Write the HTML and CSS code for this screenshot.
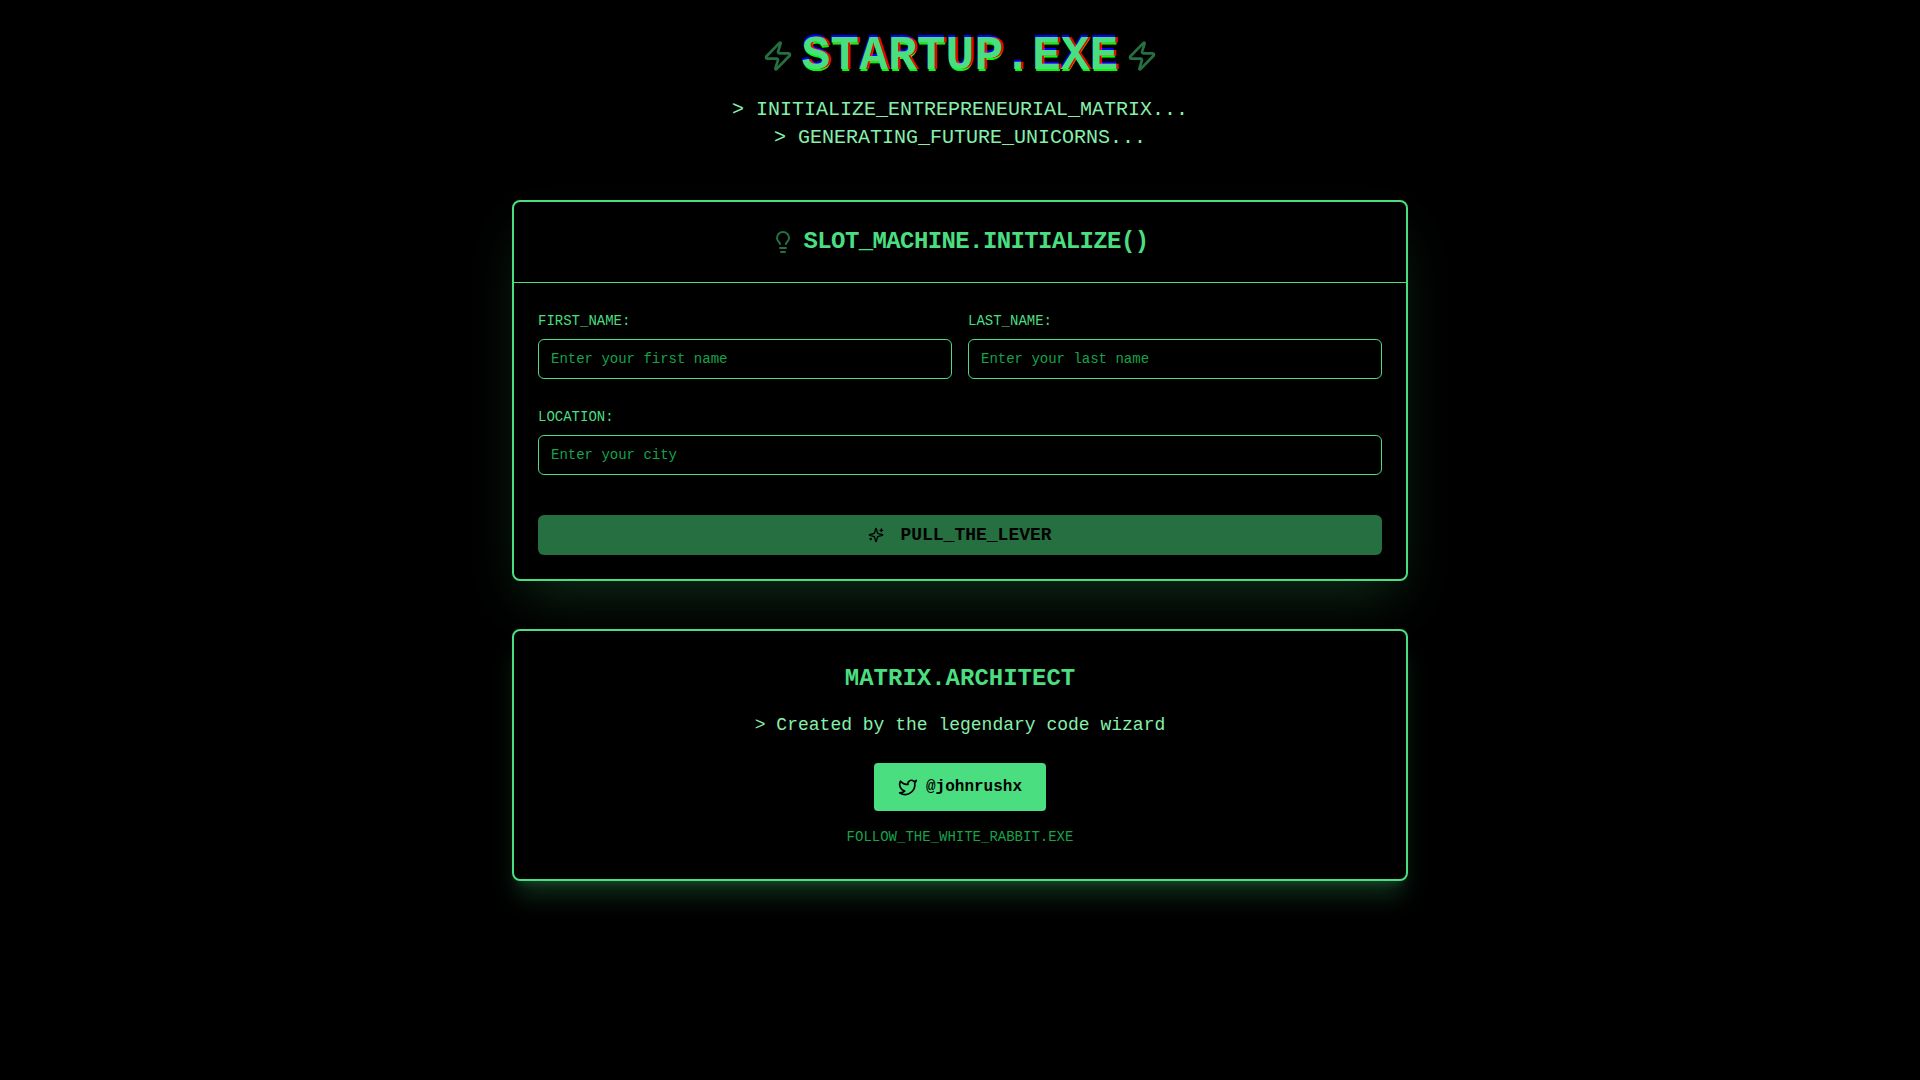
FILE: index.html
```html
<!DOCTYPE html>
<html lang="en">
<head>
    <meta charset="UTF-8">
    <meta name="viewport" content="width=device-width, initial-scale=1.0">
    <title>STARTUP.EXE</title>
    <link rel="stylesheet" href="styles.css">
</head>
<body>
    <div class="container">
        <header class="header">
            <div class="brand">
                <svg class="icon icon-lg dim" viewBox="0 0 24 24"><path d="M4 14a1 1 0 0 1-.78-1.63l9.9-10.2a.5.5 0 0 1 .86.46l-1.92 6.02A1 1 0 0 0 13 10h7a1 1 0 0 1 .78 1.63l-9.9 10.2a.5.5 0 0 1-.86-.46l1.92-6.02A1 1 0 0 0 11 14z"/></svg>
                <h1 class="glitch">STARTUP.EXE</h1>
                <svg class="icon icon-lg dim" viewBox="0 0 24 24"><path d="M4 14a1 1 0 0 1-.78-1.63l9.9-10.2a.5.5 0 0 1 .86.46l-1.92 6.02A1 1 0 0 0 13 10h7a1 1 0 0 1 .78 1.63l-9.9 10.2a.5.5 0 0 1-.86-.46l1.92-6.02A1 1 0 0 0 11 14z"/></svg>
            </div>
            <p class="tagline">&gt; INITIALIZE_ENTREPRENEURIAL_MATRIX...<br>&gt; GENERATING_FUTURE_UNICORNS...</p>
        </header>

        <main>
            <section class="card slot-card">
                <div class="card-header">
                    <svg class="icon icon-md dim" viewBox="0 0 24 24"><path d="M15 14c.2-1 .7-1.7 1.5-2.5 1-.9 1.5-2.2 1.5-3.5A6 6 0 0 0 6 8c0 1 .2 2.2 1.5 3.5.7.7 1.3 1.5 1.5 2.5"/><path d="M9 18h6"/><path d="M10 22h4"/></svg>
                    <h2>SLOT_MACHINE.INITIALIZE()</h2>
                </div>
                <form class="form">
                    <div class="row">
                        <div class="field">
                            <label for="firstName">FIRST_NAME:</label>
                            <input type="text" id="firstName" placeholder="Enter your first name">
                        </div>
                        <div class="field">
                            <label for="lastName">LAST_NAME:</label>
                            <input type="text" id="lastName" placeholder="Enter your last name">
                        </div>
                    </div>
                    <div class="field">
                        <label for="location">LOCATION:</label>
                        <input type="text" id="location" placeholder="Enter your city">
                    </div>
                    <button type="submit" class="lever" disabled>
                        <svg class="icon icon-xs" viewBox="0 0 24 24"><path d="M9.937 15.5A2 2 0 0 0 8.5 14.063l-6.135-1.582a.5.5 0 0 1 0-.962L8.5 9.936A2 2 0 0 0 9.937 8.5l1.582-6.135a.5.5 0 0 1 .963 0L14.063 8.5A2 2 0 0 0 15.5 9.937l6.135 1.581a.5.5 0 0 1 0 .964L15.5 14.063a2 2 0 0 0-1.437 1.437l-1.582 6.135a.5.5 0 0 1-.963 0z"/><path d="M20 3v4"/><path d="M22 5h-4"/><path d="M4 17v2"/><path d="M5 18H3"/></svg>
                        PULL_THE_LEVER
                    </button>
                </form>
            </section>

            <section class="card author-card">
                <h2>MATRIX.ARCHITECT</h2>
                <p class="author-text">&gt; Created by the legendary code wizard</p>
                <a class="twitter" href="https://twitter.com/johnrushx">
                    <svg class="icon icon-sm" viewBox="0 0 24 24"><path d="M22 4s-.7 2.1-2 3.4c1.6 10-9.4 17.3-18 11.6 2.2.1 4.4-.6 6-2C3 15.5.5 9.6 3 5c2.2 2.6 5.6 4.1 9 4-.9-4.2 4-6.6 7-3.8 1.1 0 3-1.2 3-1.2z"/></svg>
                    @johnrushx
                </a>
                <p class="rabbit">FOLLOW_THE_WHITE_RABBIT.EXE</p>
            </section>
        </main>
    </div>
</body>
</html>
```
FILE: styles.css
```css
* {
    box-sizing: border-box;
    margin: 0;
    padding: 0;
}

body {
    min-height: 100vh;
    padding: 32px;
    background-color: #000;
    color: #4ade80;
    font-family: "Liberation Mono", "Courier New", monospace;
    font-size: 16px;
    line-height: 24px;
}

.container {
    max-width: 896px;
    margin: 0 auto;
}

/* icons */
.icon {
    flex-shrink: 0;
    fill: none;
    stroke: currentColor;
    stroke-width: 2;
    stroke-linecap: round;
    stroke-linejoin: round;
}

.icon-xs {
    width: 16px;
    height: 16px;
}

.icon-sm {
    width: 20px;
    height: 20px;
}

.icon-md {
    width: 24px;
    height: 24px;
}

.icon-lg {
    width: 32px;
    height: 32px;
}

.dim {
    opacity: 0.5;
}

/* header */
.header {
    margin-bottom: 48px;
    text-align: center;
}

.brand {
    display: flex;
    align-items: center;
    justify-content: center;
    gap: 8px;
    margin-bottom: 16px;
}

.glitch {
    font-size: 48px;
    line-height: 48px;
    font-weight: bold;
    text-shadow: 2px 0 0 #f00, 1px 2px 0 #0f0, 0 -2px 0 #00f;
}

.tagline {
    color: #86efac;
    font-size: 20px;
    line-height: 28px;
}

/* cards */
.card {
    background-color: #000;
    border: 2px solid #4ade80;
    border-radius: 8px;
}

.card h2 {
    font-size: 24px;
    line-height: 32px;
}

.slot-card {
    margin-bottom: 48px;
    box-shadow: 0 25px 50px -12px rgba(74, 222, 128, 0.2);
}

.card-header {
    display: flex;
    align-items: center;
    justify-content: center;
    gap: 8px;
    padding: 24px;
    border-bottom: 1px solid #4ade80;
}

.card-header h2 {
    letter-spacing: -0.025em;
}

/* form */
.form {
    display: flex;
    flex-direction: column;
    gap: 24px;
    padding: 24px;
}

.row {
    display: grid;
    grid-template-columns: 1fr 1fr;
    gap: 16px;
}

.field {
    display: flex;
    flex-direction: column;
    gap: 8px;
}

.field label {
    padding-top: 4px;
    font-size: 14px;
    line-height: 20px;
}

.field input {
    width: 100%;
    height: 40px;
    padding: 8px 12px;
    background-color: #000;
    color: #4ade80;
    border: 1px solid #4ade80;
    border-radius: 6px;
    font-family: inherit;
    font-size: 14px;
    line-height: 20px;
}

.field input::placeholder {
    color: #16a34a;
}

.lever {
    display: flex;
    align-items: center;
    justify-content: center;
    gap: 16px;
    width: 100%;
    height: 40px;
    margin-top: 16px;
    background-color: #4ade80;
    color: #000;
    border: none;
    border-radius: 6px;
    font-family: inherit;
    font-size: 18px;
    font-weight: bold;
    line-height: 28px;
    opacity: 0.5;
}

/* author */
.author-card {
    padding: 32px;
    text-align: center;
    box-shadow: 0 20px 25px -5px rgba(74, 222, 128, 0.2), 0 8px 10px -6px rgba(74, 222, 128, 0.2);
}

.author-text {
    margin: 16px 0 24px;
    color: #86efac;
    font-size: 18px;
    line-height: 28px;
}

.twitter {
    display: inline-flex;
    align-items: center;
    gap: 8px;
    padding: 12px 24px;
    background-color: #4ade80;
    color: #000;
    border-radius: 4px;
    font-weight: bold;
    text-decoration: none;
    vertical-align: top;
}

.rabbit {
    margin-top: 16px;
    color: #16a34a;
    font-size: 14px;
    line-height: 20px;
}
```
